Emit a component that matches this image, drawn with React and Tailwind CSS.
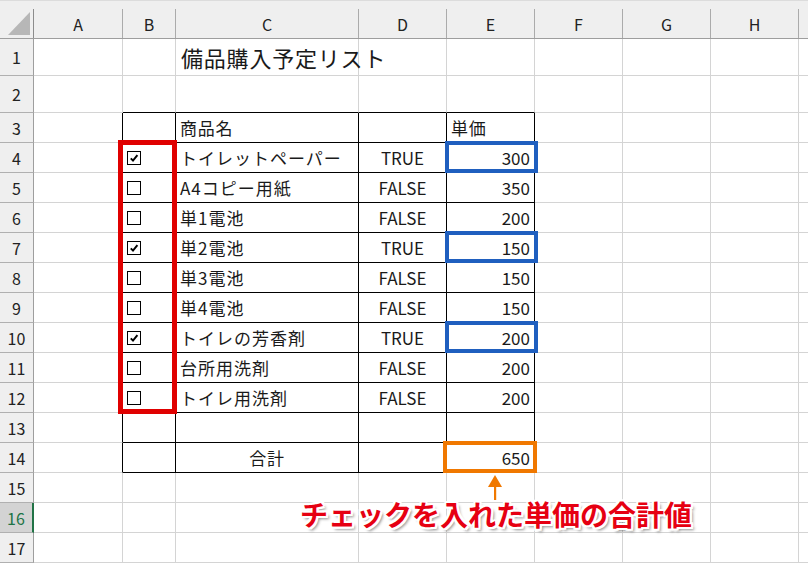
const FONT = "font-['Noto_Sans_CJK_JP','Noto_Sans',sans-serif]";

const columns = ["A", "B", "C", "D", "E", "F", "G", "H"];

const items = [
  { checked: true, name: "トイレットペーパー", flag: "TRUE", price: 300 },
  { checked: false, name: "A4コピー用紙", flag: "FALSE", price: 350 },
  { checked: false, name: "単1電池", flag: "FALSE", price: 200 },
  { checked: true, name: "単2電池", flag: "TRUE", price: 150 },
  { checked: false, name: "単3電池", flag: "FALSE", price: 150 },
  { checked: false, name: "単4電池", flag: "FALSE", price: 150 },
  { checked: true, name: "トイレの芳香剤", flag: "TRUE", price: 200 },
  { checked: false, name: "台所用洗剤", flag: "FALSE", price: 200 },
  { checked: false, name: "トイレ用洗剤", flag: "FALSE", price: 200 },
];

function Checkbox({ checked }) {
  return (
    <div className="ml-[4px] w-[14px] h-[14px] border border-black bg-white flex items-center justify-center">
      {checked && (
        <svg width="10" height="10" viewBox="0 0 10 10">
          <path d="M1.8 5.4 L4 7.6 L8.4 2.2" fill="none" stroke="black" strokeWidth="2" />
        </svg>
      )}
    </div>
  );
}

function cellContent(row, col) {
  // col: 1 = A ... 8 = H
  if (row === 1 && col === 3) {
    return <span className="relative z-10 pl-[5px] text-[22px] tracking-[0.8px]">備品購入予定リスト</span>;
  }
  if (row === 3 && col === 3) return <span className="pl-[4px] tracking-[0.8px]">商品名</span>;
  if (row === 3 && col === 5) return <span className="pl-[4px] tracking-[0.8px]">単価</span>;
  if (row >= 4 && row <= 12) {
    const item = items[row - 4];
    if (col === 2) return <Checkbox checked={item.checked} />;
    if (col === 3) return <span className="pl-[4px] tracking-[1px]">{item.name}</span>;
    if (col === 4) return <span className="w-full text-center">{item.flag}</span>;
    if (col === 5) return <span className="w-full text-right pr-[4px]">{item.price}</span>;
  }
  if (row === 14 && col === 3) return <span className="w-full text-center tracking-[0.8px]">合計</span>;
  if (row === 14 && col === 5) return <span className="w-full text-right pr-[4px]">650</span>;
  return null;
}

function cellClass(row, col) {
  const inTable = row >= 3 && row <= 14 && col >= 2 && col <= 5;
  const rightBlack = inTable || (col === 1 && row >= 3 && row <= 14);
  const bottomBlack = inTable || (row === 2 && col >= 2 && col <= 5);
  return [
    "flex items-center border-b border-r overflow-visible whitespace-nowrap",
    rightBlack ? "border-r-black" : "border-r-[#d4d4d4]",
    bottomBlack ? "border-b-black" : "border-b-[#d4d4d4]",
  ].join(" ");
}

export default function App() {
  const rows = Array.from({ length: 17 }, (_, i) => i + 1);

  return (
    <div className={`relative w-[808px] h-[565px] overflow-hidden bg-white text-[17px] text-[#1a1a1a] ${FONT}`}>
      <div className="grid grid-cols-[34px_89px_53px_183px_88px_88px_88px_88px_88px_1fr] grid-rows-[39px_37px_37px_repeat(15,30px)]">
        {/* header row */}
        <div className="bg-[#efefef] border-b border-b-[#9e9e9e] border-t border-t-[#dcdcdc] relative">
          <svg width="34" height="38" viewBox="0 0 34 38" className="absolute left-0 top-[-1px]">
            <polygon points="30,12 30,35 8,35" fill="#b7b7b7" />
            <line x1="33.5" y1="9" x2="33.5" y2="38" stroke="#8c8c8c" strokeWidth="1" />
          </svg>
        </div>
        {columns.map((c) => (
          <div key={c} className="bg-[#efefef] border-b border-b-[#9e9e9e] border-t border-t-[#dcdcdc] pt-[8px]">
            <div className="h-full border-r border-r-[#ababab] flex items-center justify-center text-[16px] text-[#222]">
              {c}
            </div>
          </div>
        ))}
        <div className="bg-[#efefef] border-b border-b-[#9e9e9e] border-t border-t-[#dcdcdc]" />

        {rows.map((row) => (
          <div key={row} className="contents">
            {row === 16 ? (
              <div className="bg-[#d3d3d3] border-b border-b-[#b0b0b0] border-r-2 border-r-[#217346] flex items-center justify-center text-[16px] text-[#217346]">
                {row}
              </div>
            ) : (
              <div className="bg-[#efefef] border-b border-b-[#b0b0b0] border-r border-r-[#9e9e9e] flex items-center justify-center text-[16px] text-[#222]">
                {row}
              </div>
            )}
            {columns.map((c, i) => (
              <div key={c} className={cellClass(row, i + 1)}>
                {cellContent(row, i + 1)}
              </div>
            ))}
            <div className="border-b border-b-[#d4d4d4]" />
          </div>
        ))}
      </div>

      {/* highlight frames */}
      <div className="absolute left-[118px] top-[140px] w-[59px] h-[274px] border-[5px] border-[#e00000]" />
      <div className="absolute left-[445px] top-[141px] w-[93px] h-[32px] border-4 border-[#1f5fbf]" />
      <div className="absolute left-[445px] top-[231px] w-[93px] h-[32px] border-4 border-[#1f5fbf]" />
      <div className="absolute left-[445px] top-[321px] w-[93px] h-[32px] border-4 border-[#1f5fbf]" />
      <div className="absolute left-[443px] top-[441px] w-[94px] h-[32px] border-4 border-[#f07800]" />

      {/* arrow */}
      <svg className="absolute left-[487px] top-[474px]" width="16" height="28" viewBox="0 0 16 28">
        <polygon points="8,1 15,13 1,13" fill="#f07800" />
        <rect x="7" y="12" width="2.2" height="14" fill="#f07800" />
      </svg>

      {/* annotation */}
      <div className="absolute left-[300px] top-[500px] text-[28px] leading-none font-bold text-[#e60012] whitespace-nowrap [text-shadow:-2px_-2px_0_#fff,2px_-2px_0_#fff,-2px_2px_0_#fff,2px_2px_0_#fff,0_-2px_0_#fff,0_2px_0_#fff,-2px_0_0_#fff,2px_0_0_#fff,3px_3px_3px_rgba(0,0,0,0.45)]">
        チェックを入れた単価の合計値
      </div>
    </div>
  );
}
